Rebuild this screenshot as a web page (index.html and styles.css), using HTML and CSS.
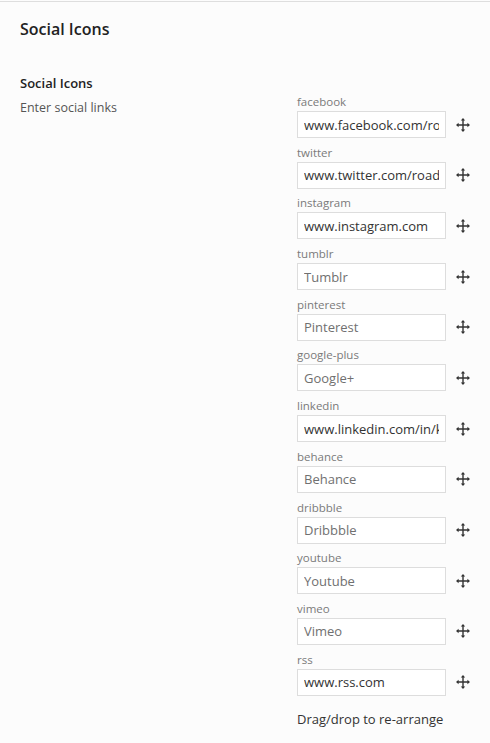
FILE: index.html
```html
<!DOCTYPE html>
<html>
<head>
<meta charset="utf-8">
<link rel="stylesheet" href="styles.css">
</head>
<body>
<div class="page">
  <h1 class="title">Social Icons</h1>
  <div class="section">
    <div class="info">
      <h2 class="sub">Social Icons</h2>
      <p class="desc">Enter social links</p>
    </div>
    <div class="fields">
      <div class="field"><label class="lbl">facebook</label><div class="row"><input class="inp" value="www.facebook.com/roadthemes" placeholder="Facebook"><svg class="move" viewBox="0 0 14 14"><path d="M7 1.5v11M1.5 7h11"/><path class="head" d="M7 0l2.2 2.6H4.8zM7 14l2.2-2.6H4.8zM0 7l2.6-2.2v4.4zM14 7l-2.6-2.2v4.4z"/></svg></div></div>
      <div class="field"><label class="lbl">twitter</label><div class="row"><input class="inp" value="www.twitter.com/roadthemes" placeholder="Twitter"><svg class="move" viewBox="0 0 14 14"><path d="M7 1.5v11M1.5 7h11"/><path class="head" d="M7 0l2.2 2.6H4.8zM7 14l2.2-2.6H4.8zM0 7l2.6-2.2v4.4zM14 7l-2.6-2.2v4.4z"/></svg></div></div>
      <div class="field"><label class="lbl">instagram</label><div class="row"><input class="inp" value="www.instagram.com" placeholder="Instagram"><svg class="move" viewBox="0 0 14 14"><path d="M7 1.5v11M1.5 7h11"/><path class="head" d="M7 0l2.2 2.6H4.8zM7 14l2.2-2.6H4.8zM0 7l2.6-2.2v4.4zM14 7l-2.6-2.2v4.4z"/></svg></div></div>
      <div class="field"><label class="lbl">tumblr</label><div class="row"><input class="inp" value="" placeholder="Tumblr"><svg class="move" viewBox="0 0 14 14"><path d="M7 1.5v11M1.5 7h11"/><path class="head" d="M7 0l2.2 2.6H4.8zM7 14l2.2-2.6H4.8zM0 7l2.6-2.2v4.4zM14 7l-2.6-2.2v4.4z"/></svg></div></div>
      <div class="field"><label class="lbl">pinterest</label><div class="row"><input class="inp" value="" placeholder="Pinterest"><svg class="move" viewBox="0 0 14 14"><path d="M7 1.5v11M1.5 7h11"/><path class="head" d="M7 0l2.2 2.6H4.8zM7 14l2.2-2.6H4.8zM0 7l2.6-2.2v4.4zM14 7l-2.6-2.2v4.4z"/></svg></div></div>
      <div class="field"><label class="lbl">google-plus</label><div class="row"><input class="inp" value="" placeholder="Google+"><svg class="move" viewBox="0 0 14 14"><path d="M7 1.5v11M1.5 7h11"/><path class="head" d="M7 0l2.2 2.6H4.8zM7 14l2.2-2.6H4.8zM0 7l2.6-2.2v4.4zM14 7l-2.6-2.2v4.4z"/></svg></div></div>
      <div class="field"><label class="lbl">linkedin</label><div class="row"><input class="inp" value="www.linkedin.com/in/kevinroadthemes" placeholder="Linkedin"><svg class="move" viewBox="0 0 14 14"><path d="M7 1.5v11M1.5 7h11"/><path class="head" d="M7 0l2.2 2.6H4.8zM7 14l2.2-2.6H4.8zM0 7l2.6-2.2v4.4zM14 7l-2.6-2.2v4.4z"/></svg></div></div>
      <div class="field"><label class="lbl">behance</label><div class="row"><input class="inp" value="" placeholder="Behance"><svg class="move" viewBox="0 0 14 14"><path d="M7 1.5v11M1.5 7h11"/><path class="head" d="M7 0l2.2 2.6H4.8zM7 14l2.2-2.6H4.8zM0 7l2.6-2.2v4.4zM14 7l-2.6-2.2v4.4z"/></svg></div></div>
      <div class="field"><label class="lbl">dribbble</label><div class="row"><input class="inp" value="" placeholder="Dribbble"><svg class="move" viewBox="0 0 14 14"><path d="M7 1.5v11M1.5 7h11"/><path class="head" d="M7 0l2.2 2.6H4.8zM7 14l2.2-2.6H4.8zM0 7l2.6-2.2v4.4zM14 7l-2.6-2.2v4.4z"/></svg></div></div>
      <div class="field"><label class="lbl">youtube</label><div class="row"><input class="inp" value="" placeholder="Youtube"><svg class="move" viewBox="0 0 14 14"><path d="M7 1.5v11M1.5 7h11"/><path class="head" d="M7 0l2.2 2.6H4.8zM7 14l2.2-2.6H4.8zM0 7l2.6-2.2v4.4zM14 7l-2.6-2.2v4.4z"/></svg></div></div>
      <div class="field"><label class="lbl">vimeo</label><div class="row"><input class="inp" value="" placeholder="Vimeo"><svg class="move" viewBox="0 0 14 14"><path d="M7 1.5v11M1.5 7h11"/><path class="head" d="M7 0l2.2 2.6H4.8zM7 14l2.2-2.6H4.8zM0 7l2.6-2.2v4.4zM14 7l-2.6-2.2v4.4z"/></svg></div></div>
      <div class="field"><label class="lbl">rss</label><div class="row"><input class="inp" value="www.rss.com" placeholder="RSS"><svg class="move" viewBox="0 0 14 14"><path d="M7 1.5v11M1.5 7h11"/><path class="head" d="M7 0l2.2 2.6H4.8zM7 14l2.2-2.6H4.8zM0 7l2.6-2.2v4.4zM14 7l-2.6-2.2v4.4z"/></svg></div></div>
      <p class="note">Drag/drop to re-arrange</p>
    </div>
  </div>
</div>
</body>
</html>
```
FILE: styles.css
```css
html, body {
  margin: 0;
  padding: 0;
  background: #fcfcfc;
}
body {
  padding-top: 1px;
  font-family: "Open Sans", "Noto Sans", sans-serif;
  color: #333;
}
.page {
  border-top: 1px solid #dedede;
  padding: 0 20px;
}
.title {
  margin: 15px 0 0;
  font-size: 16px;
  line-height: 24px;
  font-weight: 600;
  color: #222;
}
.section {
  display: grid;
  grid-template-columns: 277px 1fr;
  margin-top: 32px;
}
.sub {
  margin: 0;
  font-size: 13px;
  line-height: 20px;
  font-weight: 600;
  color: #222;
}
.desc {
  margin: 5px 0 0;
  font-size: 12.5px;
  line-height: 20px;
  color: #555;
}
.fields {
  padding-top: 20px;
  display: flex;
  flex-direction: column;
  gap: 5.7px;
}
.field {
  display: flex;
  flex-direction: column;
}
.lbl {
  font-size: 11.5px;
  line-height: 18px;
  font-weight: 400;
  color: #7a7a7a;
}
.row {
  display: flex;
  align-items: center;
  gap: 10px;
}
.inp {
  box-sizing: border-box;
  width: 149px;
  height: 27px;
  margin: 0;
  padding: 0 6px;
  border: 1px solid #dddddd;
  background: #fff;
  font-family: "Open Sans", "Noto Sans", sans-serif;
  font-size: 13px;
  color: #333;
  outline: none;
  border-radius: 0;
}
.inp::placeholder {
  color: #707070;
}
.move {
  width: 14px;
  height: 14px;
  flex: none;
}
.move path {
  stroke: #333;
  stroke-width: 1.4;
  fill: none;
}
.move path.head {
  stroke: none;
  fill: #333;
}
.note {
  margin: 8px 0 0;
  font-size: 13px;
  line-height: 20px;
  color: #333;
}
```
